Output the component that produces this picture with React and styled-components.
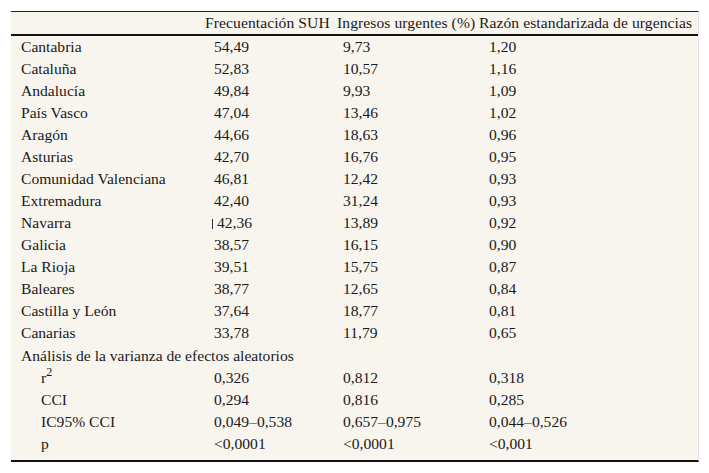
import styled, { createGlobalStyle } from "styled-components";

const GlobalStyle = createGlobalStyle`
  body {
    margin: 0;
    background: #fff;
    font-family: "Liberation Serif", "Times New Roman", serif;
    color: #1a1a1a;
  }
`;

const Page = styled.div`
  padding: 11px 11px 0 11px;
  width: 709px;
  box-sizing: border-box;
`;

const Table = styled.div`
  width: 687px;
  background: #f8f5ef;
  border-top: 1px solid #222;
  border-bottom: 2px solid #111;
  border-right: 1px solid #e6e3de;
  display: grid;
  grid-template-columns: 192px 131px 141px 1fr;
  font-size: 15.6px;
  line-height: 22px;
`;

const HeadCell = styled.div`
  height: 22px;
  padding-left: ${(p) => p.$pad || 0}px;
  border-bottom: 2px solid #111;
  white-space: nowrap;
  letter-spacing: 0.08px;
`;

const Cell = styled.div`
  height: 22px;
  padding-left: ${(p) => p.$pad}px;
  white-space: nowrap;
`;

const SectionCell = styled.div`
  grid-column: 1 / -1;
  height: 23px;
  padding-left: 10px;
  line-height: 24px;
`;

const Spacer = styled.div`
  grid-column: 1 / -1;
  height: 5px;
`;

const Sup = styled.sup`
  font-size: 12px;
  vertical-align: 7px;
  line-height: 0;
`;

const Bar = styled.span`
  display: inline-block;
  width: 1px;
  height: 10px;
  background: #333;
  margin: 0 4px 0 0;
  vertical-align: -1px;
`;

const regions = [
  ["Cantabria", "54,49", "9,73", "1,20"],
  ["Cataluña", "52,83", "10,57", "1,16"],
  ["Andalucía", "49,84", "9,93", "1,09"],
  ["País Vasco", "47,04", "13,46", "1,02"],
  ["Aragón", "44,66", "18,63", "0,96"],
  ["Asturias", "42,70", "16,76", "0,95"],
  ["Comunidad Valenciana", "46,81", "12,42", "0,93"],
  ["Extremadura", "42,40", "31,24", "0,93"],
  ["Navarra", "42,36", "13,89", "0,92", true],
  ["Galicia", "38,57", "16,15", "0,90"],
  ["La Rioja", "39,51", "15,75", "0,87"],
  ["Baleares", "38,77", "12,65", "0,84"],
  ["Castilla y León", "37,64", "18,77", "0,81"],
  ["Canarias", "33,78", "11,79", "0,65"],
];

const stats = [
  [<>r<Sup>2</Sup></>, "0,326", "0,812", "0,318"],
  ["CCI", "0,294", "0,816", "0,285"],
  ["IC95% CCI", "0,049–0,538", "0,657–0,975", "0,044–0,526"],
  ["p", "<0,0001", "<0,0001", "<0,001"],
];

export default function App() {
  return (
    <Page>
      <GlobalStyle />
      <Table>
        <HeadCell />
        <HeadCell $pad={2}>Frecuentación SUH</HeadCell>
        <HeadCell $pad={3}>Ingresos urgentes (%)</HeadCell>
        <HeadCell $pad={4}>Razón estandarizada de urgencias</HeadCell>
        {regions.map(([name, a, b, c, mark]) => [
          <Cell $pad={10} key={name + "0"}>{name}</Cell>,
          <Cell $pad={mark ? 9 : 11} key={name + "1"}>{mark && <Bar />}{a}</Cell>,
          <Cell $pad={9} key={name + "2"}>{b}</Cell>,
          <Cell $pad={14} key={name + "3"}>{c}</Cell>,
        ])}
        <SectionCell>Análisis de la varianza de efectos aleatorios</SectionCell>
        {stats.map(([name, a, b, c], i) => [
          <Cell $pad={30} key={i + "0"}>{name}</Cell>,
          <Cell $pad={11} key={i + "1"}>{a}</Cell>,
          <Cell $pad={9} key={i + "2"}>{b}</Cell>,
          <Cell $pad={14} key={i + "3"}>{c}</Cell>,
        ])}
        <Spacer />
      </Table>
    </Page>
  );
}
